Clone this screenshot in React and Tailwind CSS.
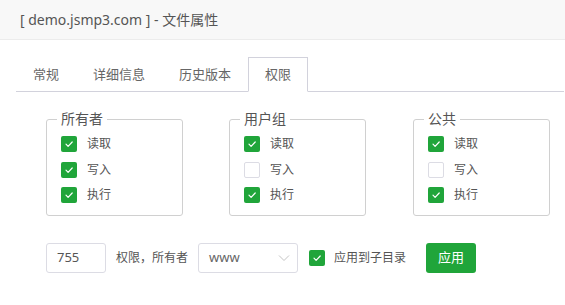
import React from 'react';

const FONT = { fontFamily: '"Noto Sans", "Noto Sans CJK SC", sans-serif' };

const Box = ({ checked }) =>
  checked ? (
    <span className="w-4 h-4 rounded-[2px] bg-[#20a53a] flex items-center justify-center shrink-0">
      <svg width="16" height="16" viewBox="0 0 16 16" fill="none">
        <path d="M5 8.2 L7.1 10.3 L11.2 6" stroke="#fff" strokeWidth="1.2" strokeLinecap="round" strokeLinejoin="round" />
      </svg>
    </span>
  ) : (
    <span className="w-4 h-4 rounded-[2px] border border-[#dcdce4] bg-white shrink-0" />
  );

const Group = ({ title, perms, className }) => (
  <fieldset className={`w-[137px] border border-[#d0d0d0] rounded-[3px] px-[10px] pb-[12px] ${className}`}>
    <legend className="px-1 text-[14px] leading-[14px] text-[#555]">{title}</legend>
    <div className="pl-[4px] pt-[10px] flex flex-col gap-[9.5px]">
      {perms.map(([label, on]) => (
        <div key={label} className="flex items-center h-4">
          <Box checked={on} />
          <span className="ml-[10px] text-[12px] text-[#555]">{label}</span>
        </div>
      ))}
    </div>
  </fieldset>
);

export default function App() {
  const tabs = ['常规', '详细信息', '历史版本', '权限'];
  const active = '权限';

  return (
    <div className="w-[565px] h-[305px] bg-white overflow-hidden" style={FONT}>
      {/* title bar */}
      <div className="h-[40px] bg-[#f8f8f8] border-b border-[#ececec] pl-5 flex items-center text-[14px] text-[#555]">
        [ demo.jsmp3.com ] - 文件属性
      </div>

      {/* tabs */}
      <div className="mt-[17px] ml-4 mr-px flex border-b border-[#d2d2dc]">
        {tabs.map((t) => (
          <div
            key={t}
            className={`h-[35px] -mb-px px-4 flex items-center text-[13px] text-[#666] border ${
              t === active ? 'border-[#d2d2dc] border-b-white bg-white' : 'border-transparent'
            }`}
          >
            {t}
          </div>
        ))}
      </div>

      {/* permission groups */}
      <div className="mt-[20px] pl-[46px] flex">
        <Group title="所有者" perms={[['读取', true], ['写入', true], ['执行', true]]} />
        <Group title="用户组" className="ml-[46px]" perms={[['读取', true], ['写入', false], ['执行', true]]} />
        <Group title="公共" className="ml-[47px]" perms={[['读取', true], ['写入', false], ['执行', true]]} />
      </div>

      {/* bottom controls */}
      <div className="mt-[27px] pl-[46px] flex items-center h-[30px]">
        <div className="w-[60px] h-[30px] border border-[#dcdce4] rounded-[3px] pl-[10px] flex items-center text-[13px] text-[#555]">
          755
        </div>
        <span className="ml-[10px] text-[12px] text-[#555]">权限，所有者</span>
        <div className="ml-[10px] w-[100px] h-[30px] border border-[#dcdce4] rounded-[3px] pl-[10px] pr-[7px] flex items-center justify-between text-[13px] text-[#666]">
          <span>www</span>
          <svg width="12" height="8" viewBox="0 0 12 8" fill="none">
            <path d="M1 1.5 L6 6.5 L11 1.5" stroke="#c4c4c4" strokeWidth="1" />
          </svg>
        </div>
        <span className="ml-[11px]">
          <Box checked />
        </span>
        <span className="ml-[9px] text-[12px] text-[#555]">应用到子目录</span>
        <button className="ml-[20px] w-[50px] h-[30px] rounded-[3px] bg-[#20a53a] text-white text-[13px] flex items-center justify-center">
          应用
        </button>
      </div>
    </div>
  );
}
